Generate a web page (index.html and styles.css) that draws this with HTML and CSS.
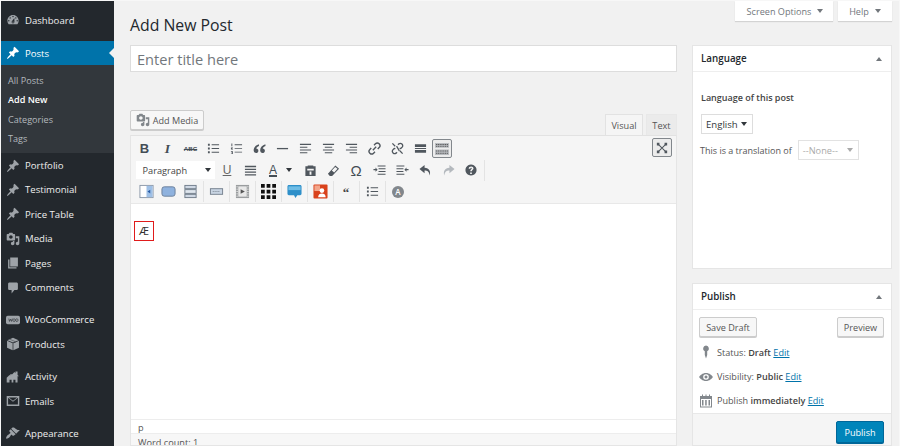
FILE: index.html
```html
<!DOCTYPE html>
<html lang="en">
<head>
<meta charset="utf-8">
<title>Add New Post</title>
<link rel="stylesheet" href="styles.css">
</head>
<body>
<svg class="defs" width="0" height="0" aria-hidden="true">
  <symbol id="i-dash" viewBox="0 0 20 20"><path d="M3.76 16h12.48c1.1-1.37 1.76-3.11 1.76-5 0-4.42-3.58-8-8-8s-8 3.58-8 8c0 1.89.66 3.63 1.76 5zM10 4c.55 0 1 .45 1 1s-.45 1-1 1-1-.45-1-1 .45-1 1-1zM6 6c.55 0 1 .45 1 1s-.45 1-1 1-1-.45-1-1 .45-1 1-1zm8 0c.55 0 1 .45 1 1s-.45 1-1 1-1-.45-1-1 .45-1 1-1zm-5.37 5.55L12 7v6c0 1.1-.9 2-2 2s-2-.9-2-2c0-.57.24-1.08.63-1.45zM4 10c.55 0 1 .45 1 1s-.45 1-1 1-1-.45-1-1 .45-1 1-1zm12 0c.55 0 1 .45 1 1s-.45 1-1 1-1-.45-1-1 .45-1 1-1zm-5 3c0-.55-.45-1-1-1s-1 .45-1 1 .45 1 1 1 1-.45 1-1z" fill-rule="evenodd"/></symbol>
  <symbol id="i-pin" viewBox="0 0 20 20"><path d="M10.44 3.02l1.82-1.82 6.36 6.35-1.83 1.82c-1.05-.68-2.48-.57-3.41.36l-.75.75c-.92.93-1.04 2.35-.35 3.41l-1.83 1.82-2.41-2.41-2.8 2.79c-.42.42-3.38 2.71-3.8 2.29s1.86-3.39 2.28-3.81l2.79-2.79L4.1 9.36l1.83-1.82c1.05.69 2.48.57 3.4-.36l.75-.75c.93-.92 1.05-2.35.36-3.41z"/></symbol>
  <symbol id="i-media" viewBox="0 0 20 20"><path d="M13 11V4c0-.55-.45-1-1-1h-1.67L9 1H5L3.67 3H2c-.55 0-1 .45-1 1v7c0 .55.45 1 1 1h10c.55 0 1-.45 1-1zM7 4.5c1.38 0 2.5 1.12 2.5 2.5S8.38 9.5 7 9.5 4.5 8.38 4.5 7 5.62 4.5 7 4.5zM14 6h5v10.5c0 1.38-1.12 2.5-2.5 2.5S14 17.88 14 16.5s1.12-2.5 2.5-2.5c.17 0 .34.02.5.05V9h-3V6zm-4 8.05V13h2v3.5c0 1.38-1.12 2.5-2.5 2.5S7 17.88 7 16.5 8.12 14 9.5 14c.17 0 .34.02.5.05z" fill-rule="evenodd"/></symbol>
  <symbol id="i-pages" viewBox="0 0 20 20"><path d="M6 15V2h11v13H6zM3 18V5h2v11h10v2H3z"/></symbol>
  <symbol id="i-comment" viewBox="0 0 20 20"><path d="M5 2h10c1.1 0 2 .9 2 2v7c0 1.1-.9 2-2 2h-3l-4 5v-5H5c-1.1 0-2-.9-2-2V4c0-1.1.9-2 2-2z"/></symbol>
  <symbol id="i-woo" viewBox="0 0 20 14"><rect width="20" height="12" y="1" rx="2.4"/><path d="M4 5l1 4 1.500-3.200L8 9l1-4M11.500 5.200a1.600 2 0 1 0 .01 0M15.500 5.200a1.600 2 0 1 0 .01 0" fill="none" stroke="#23282d" stroke-width=".9"/></symbol>
  <symbol id="i-box" viewBox="0 0 20 20"><path d="M10 1l8 3.500L10 8 2 4.500zM1.500 5.500l8 3.500v10l-8-3.500zM18.500 5.500v10l-8 3.500V9z"/><path d="M5 3l8 3.500v2" fill="none" stroke="#23282d" stroke-width=".6"/></symbol>
  <symbol id="i-act" viewBox="0 0 20 20"><path d="M1 18V11l4-4 1 1V6h3l3-3 1.500 1.500V2h3v5l2 2h-2v9h-3v-4h-3v4H8v-4H5v4z"/></symbol>
  <symbol id="i-mail" viewBox="0 0 20 16"><path d="M1 1h18v14H1zm2 2.500V13h14V3.500L10 9zM4 3l6 4.500L16 3z" fill-rule="evenodd"/></symbol>
  <symbol id="i-brush" viewBox="0 0 20 20"><path d="M14.480 11.060L7.410 3.990l1.500-1.500c.5-.56 2.300-.47 3.510.32 1.210.8 1.430 1.280 2.910 2.100 1.180.64 2.450 1.260 4.450.85zm-.71.71L6.700 4.700 4.930 6.470c-.39.39-.39 1.020 0 1.410l1.060 1.060c.39.39.39 1.030 0 1.420-.6.6-1.430 1.110-2.210 1.690-.35.26-.7.53-1.010.84C1.430 13.230.1 16.490.1 17.500c0 1.170 2.830.7 4.500-1 .9-.9 1.600-2.700 2.500-3.800.4-.4 1-.4 1.400 0l1.060 1.060c.39.39 1.020.39 1.410 0z"/></symbol>
  <symbol id="t-ul" viewBox="0 0 14 14"><path d="M1 2h2v2H1zM1 6h2v2H1zM1 10h2v2H1zM5 2.500h8v1H5zM5 6.500h8v1H5zM5 10.500h8v1H5z"/></symbol>
  <symbol id="t-ol" viewBox="0 0 14 14"><path d="M1.500 1.500h1v3h-1zM1 6h2.200v.8H2v.6h1.200v.8H1zM1 10h2.200v3H1v-.7h1.400v-.5H1.500v-.6h.9v-.5H1zM5 2.500h8v.9H5zM5 6.500h8v.9H5zM5 10.500h8v.9H5z"/></symbol>
  <symbol id="t-quote" viewBox="0 0 14 14"><path d="M6.300 2.500C3 3.500.7 5.800.7 9c0 1.700 1.100 2.800 2.500 2.800S5.800 10.700 5.800 9.300 4.700 6.900 3.500 6.900c.2-1 1.200-2 3-2.700zM13.300 2.500c-3.300 1-5.600 3.300-5.600 6.500 0 1.700 1.100 2.800 2.500 2.800s2.600-1.100 2.600-2.500-1.100-2.400-2.300-2.400c.2-1 1.200-2 3-2.700z"/></symbol>
  <symbol id="t-hr" viewBox="0 0 14 14"><path d="M1 6.400h12v1.400H1z"/></symbol>
  <symbol id="t-al" viewBox="0 0 14 14"><path d="M1 2h12v1.200H1zM1 5h8v1.200H1zM1 8h12v1.200H1zM1 11h8v1.200H1z"/></symbol>
  <symbol id="t-ac" viewBox="0 0 14 14"><path d="M1 2h12v1.200H1zM3 5h8v1.200H3zM1 8h12v1.200H1zM3 11h8v1.200H3z"/></symbol>
  <symbol id="t-ar" viewBox="0 0 14 14"><path d="M1 2h12v1.200H1zM5 5h8v1.200H5zM1 8h12v1.200H1zM5 11h8v1.200H5z"/></symbol>
  <symbol id="t-link" viewBox="0 0 14 14"><path d="M5.200 8.800l3.600-3.600M6.500 3.500l1.500-1.500a2.700 2.700 0 0 1 4 4L10.500 7.500M7.500 10.500L6 12a2.700 2.700 0 0 1-4-4L3.500 6.500" fill="none" stroke="currentColor" stroke-width="1.500"/></symbol>
  <symbol id="t-unlink" viewBox="0 0 14 14"><path d="M7.500 3l1-1a2.500 2.500 0 0 1 3.500 3.500l-1.500 1.500-1.200-.2M6.500 11l-1 1A2.500 2.500 0 0 1 2 8.500l1.500-1.500 1.200.2M1.500 1.500l3 3M12.500 12.500l-3-3M9 9.500l-3-5" fill="none" stroke="currentColor" stroke-width="1.400"/></symbol>
  <symbol id="t-more" viewBox="0 0 14 14"><path d="M1 2.500h12v3H1zM1 8.500h12v3H1zM1 6.500h12v1H1z"/></symbol>
  <symbol id="t-kitchen" viewBox="0 0 16 14"><path d="M1 1h14v4.800H1zM1 7.500h14V13H1z" fill="#b9bcc0"/><path d="M2 2.500h12M2 4.300h12M2 9h12M2 11.300h12" stroke="#444" stroke-width=".8" stroke-dasharray="1.200 .6"/></symbol>
  <symbol id="t-just" viewBox="0 0 14 14"><path d="M1 2h12v1.500H1zM1 5h12v1.500H1zM1 8h12v1.500H1zM1 11h12v1.500H1z"/></symbol>
  <symbol id="t-paste" viewBox="0 0 14 14"><path d="M1.500 2.500H4V1.500h6v1h2.500V13h-11zM3.500 5v2h7V5zM6 8v3.500h2V8z" fill-rule="evenodd"/></symbol>
  <symbol id="t-erase" viewBox="0 0 14 14"><path d="M9 1.500l4 3.500-7.500 8H3l-2-2.500zM8.800 3.200l2.500 2-3.600 4-2.500-2.200z" fill-rule="evenodd"/></symbol>
  <symbol id="t-indent" viewBox="0 0 14 14"><path d="M5 1.500h8.500v1.200H5zM6 4.500h7.500v1.200H6zM6 7.500h7.500v1.200H6zM5 10.500h8.500v1.200H5zM.5 5.400h2.200V3.800L5 6.100 2.700 8.400V6.800H.5z"/></symbol>
  <symbol id="t-outdent" viewBox="0 0 14 14"><path d="M.5 1.500H9v1.200H.5zM.5 4.500H8v1.200H.5zM.5 7.500H8v1.200H.5zM.5 10.500H9v1.200H.5zM13.500 5.400h-2.200V3.800L9 6.100l2.300 2.300V6.800h2.200z"/></symbol>
  <symbol id="t-undo" viewBox="0 0 14 14"><path d="M6 1L.5 5.500 6 10V7c3 0 5 1 5.500 5.500C13 8 11 4 6 4z"/></symbol>
  <symbol id="t-redo" viewBox="0 0 14 14"><path d="M8 1l5.500 4.500L8 10V7c-3 0-5 1-5.500 5.500C1 8 3 4 8 4z"/></symbol>
  <symbol id="t-help" viewBox="0 0 14 14"><path d="M7 .5a6.500 6.500 0 1 0 .01 0zM6 9.800h2v1.800H6zM4.300 5.500C4.300 3.800 5.500 2.800 7.200 2.800c1.600 0 2.700 1 2.700 2.300 0 1.700-1.900 1.900-1.900 3.500H6.100c0-2.200 1.800-2.400 1.800-3.400 0-.5-.3-.8-.8-.8s-.8.4-.9 1z" fill-rule="evenodd"/></symbol>
</svg>
<div class="page">
  <nav class="side">
    <a class="item"><svg class="mi"><use href="#i-dash"/></svg>Dashboard</a>
    <div class="gap-s"></div>
    <a class="item active"><svg class="mi"><use href="#i-pin"/></svg>Posts</a>
    <div class="sub">
      <a>All Posts</a>
      <a class="cur">Add New</a>
      <a>Categories</a>
      <a>Tags</a>
    </div>
    <a class="item"><svg class="mi"><use href="#i-pin"/></svg>Portfolio</a>
    <a class="item"><svg class="mi"><use href="#i-pin"/></svg>Testimonial</a>
    <a class="item"><svg class="mi"><use href="#i-pin"/></svg>Price Table</a>
    <a class="item"><svg class="mi"><use href="#i-media"/></svg>Media</a>
    <a class="item"><svg class="mi"><use href="#i-pages"/></svg>Pages</a>
    <a class="item"><svg class="mi"><use href="#i-comment"/></svg>Comments</a>
    <div class="gap-m"></div>
    <a class="item"><svg class="mi"><use href="#i-woo"/></svg>WooCommerce</a>
    <a class="item"><svg class="mi"><use href="#i-box"/></svg>Products</a>
    <div class="gap-m"></div>
    <a class="item"><svg class="mi"><use href="#i-act"/></svg>Activity</a>
    <a class="item"><svg class="mi"><use href="#i-mail"/></svg>Emails</a>
    <div class="gap-m"></div>
    <a class="item"><svg class="mi"><use href="#i-brush"/></svg>Appearance</a>
  </nav>
  <main class="main">
    <div class="screen-tabs">
      <button class="stab so">Screen Options<i class="caret"></i></button>
      <button class="stab hp">Help<i class="caret"></i></button>
    </div>
    <div class="cols">
      <section class="left">
        <h1 class="title">Add New Post</h1>
        <div class="title-input">Enter title here</div>
        <div class="media-row">
          <button class="btn add-media"><svg class="am"><use href="#i-media"/></svg>Add Media</button>
          <div class="tabs">
            <span class="tab on">Visual</span>
            <span class="tab tx">Text</span>
          </div>
        </div>
        <div class="editor">
          <div class="toolbar">
            <div class="tools">
              <div class="row">
                <span class="t tb">B</span>
                <span class="t ti">I</span>
                <span class="t tabc">ABC</span>
                <span class="t"><svg class="g"><use href="#t-ul"/></svg></span>
                <span class="t"><svg class="g"><use href="#t-ol"/></svg></span>
                <span class="t"><svg class="g"><use href="#t-quote"/></svg></span>
                <span class="t"><svg class="g"><use href="#t-hr"/></svg></span>
                <span class="t"><svg class="g"><use href="#t-al"/></svg></span>
                <span class="t"><svg class="g"><use href="#t-ac"/></svg></span>
                <span class="t"><svg class="g"><use href="#t-ar"/></svg></span>
                <span class="t"><svg class="g"><use href="#t-link"/></svg></span>
                <span class="t"><svg class="g"><use href="#t-unlink"/></svg></span>
                <span class="t"><svg class="g"><use href="#t-more"/></svg></span>
                <span class="t kitchen"><svg class="gk"><use href="#t-kitchen"/></svg></span>
              </div>
              <div class="row row2">
                <span class="fmt">Paragraph<i class="caret dark"></i></span>
                <span class="t tu">U</span>
                <span class="t"><svg class="g"><use href="#t-just"/></svg></span>
                <span class="t ta">A</span>
                <span class="cm"><i class="caret dark"></i></span>
                <span class="t"><svg class="g"><use href="#t-paste"/></svg></span>
                <span class="t"><svg class="g"><use href="#t-erase"/></svg></span>
                <span class="t tom">Ω</span>
                <span class="t"><svg class="g"><use href="#t-indent"/></svg></span>
                <span class="t"><svg class="g"><use href="#t-outdent"/></svg></span>
                <span class="t"><svg class="g"><use href="#t-undo"/></svg></span>
                <span class="t off"><svg class="g"><use href="#t-redo"/></svg></span>
                <span class="t"><svg class="g gh"><use href="#t-help"/></svg></span>
                <span class="div"></span>
              </div>
              <div class="row row3">
                <span class="u"><svg class="c" viewBox="0 0 16 16"><rect x="1" y="1.500" width="14" height="13" fill="#fff" stroke="#8a97a8"/><rect x="8" y="2" width="6.500" height="12" fill="#9fc0e6"/><path d="M9 8l3-2v4z" fill="#2a5ea8"/></svg></span>
                <span class="u"><svg class="c" viewBox="0 0 16 16"><rect x="1" y="3" width="14" height="10" rx="2.500" fill="#8fb2de" stroke="#6b7f9a"/></svg></span>
                <span class="u"><svg class="c" viewBox="0 0 16 16"><rect x="2" y="1.500" width="12" height="3.500" fill="#cfd8e4" stroke="#707c8a"/><rect x="2" y="6" width="12" height="4" fill="#dfe6ee" stroke="#707c8a"/><rect x="2" y="11" width="12" height="3.500" fill="#cfd8e4" stroke="#707c8a"/></svg></span>
                <span class="div"></span>
                <span class="u"><svg class="c" viewBox="0 0 16 16"><rect x="1.500" y="5" width="13" height="6" fill="#c8d4e2" stroke="#76818e"/><path d="M4 8h8" stroke="#76818e" stroke-dasharray="1 1"/></svg></span>
                <span class="div"></span>
                <span class="u"><svg class="c" viewBox="0 0 16 16"><rect x="1" y="1" width="14" height="14" fill="#9a9d9f"/><rect x="3.500" y="2.500" width="9" height="11" fill="#e8e8e8"/><path d="M6 5.500l4.500 2.500L6 10.500z" fill="#555"/><path d="M1.500 3h1.500M1.500 5.500h1.500M1.500 8h1.500M1.500 10.500h1.500M1.500 13h1.500M13 3h1.500M13 5.500h1.500M13 8h1.500M13 10.500h1.500M13 13h1.500" stroke="#eee" stroke-width=".9"/></svg></span>
                <span class="div"></span>
                <span class="u"><svg class="c k" viewBox="0 0 16 16"><path d="M0 0h4v4H0zM6 0h4v4H6zM12 0h4v4h-4zM0 6h4v4H0zM6 6h4v4H6zM12 6h4v4h-4zM0 12h4v4H0zM6 12h4v4H6zM12 12h4v4h-4z" fill="#111"/></svg></span>
                <span class="div"></span>
                <span class="u"><svg class="c" viewBox="0 0 16 16"><path d="M2 1h12c.8 0 1.500.7 1.500 1.500v8c0 .8-.7 1.500-1.500 1.500h-3l-2 3-1.500-3H2c-.8 0-1.500-.7-1.500-1.500v-8C.5 1.700 1.200 1 2 1z" fill="#2e8fc9"/><path d="M1.500 2.500h13v4h-13z" fill="#6fbde6"/></svg></span>
                <span class="div"></span>
                <span class="u"><svg class="c" viewBox="0 0 16 16"><rect x=".5" y=".5" width="15" height="15" rx="1" fill="#d9421c"/><rect x="1.500" y="1.500" width="6" height="6" fill="#f3a58a"/><circle cx="9.500" cy="7" r="2.500" fill="#fff"/><path d="M5.500 14c0-3 2-4 4-4s4 1 4 4z" fill="#fff"/></svg></span>
                <span class="div"></span>
                <span class="u tq">“</span>
                <span class="div"></span>
                <span class="u"><svg class="g"><use href="#t-ul"/></svg></span>
                <span class="div"></span>
                <span class="u"><span class="round">A</span></span>
              </div>
            </div>
            <span class="full"><svg class="g gf" viewBox="0 0 14 14"><path d="M1 1h3v3H1zM10 1h3v3h-3zM1 10h3v3H1zM10 10h3v3h-3z"/><path d="M3 3l8 8M11 3l-8 8" stroke="currentColor" stroke-width="1.200"/></svg></span>
          </div>
          <div class="content"><span class="ae">Æ</span></div>
          <div class="path">p</div>
          <div class="count">Word count: 1</div>
        </div>
      </section>
      <aside class="right">
        <div class="box lang">
          <h2 class="box-h">Language<i class="caret up"></i></h2>
          <div class="lang-body">
            <p class="lbl">Language of this post</p>
            <span class="sel">English<i class="caret dark"></i></span>
            <div class="trans">This is a translation of<span class="sel none">--None--<i class="caret"></i></span></div>
          </div>
        </div>
        <div class="box pub">
          <h2 class="box-h">Publish<i class="caret up"></i></h2>
          <div class="pub-btns">
            <button class="btn sd">Save Draft</button>
            <button class="btn pv">Preview</button>
          </div>
          <div class="meta"><svg class="mt" viewBox="0 0 14 14"><path d="M7 .5a3 3 0 0 1 1.200 5.700V10L7 13.500 5.800 10V6.200A3 3 0 0 1 7 .5z"/></svg><span>Status: <b>Draft</b> <a>Edit</a></span></div>
          <div class="meta"><svg class="mt" viewBox="0 0 14 14"><path d="M7 3C3.500 3 1 5.500 0 7c1 1.500 3.500 4 7 4s6-2.500 7-4c-1-1.500-3.500-4-7-4zm0 1.200A2.800 2.800 0 1 1 7 9.800 2.800 2.800 0 0 1 7 4.200zm0 1.300a1.500 1.500 0 1 0 .01 0z" fill-rule="evenodd"/></svg><span>Visibility: <b>Public</b> <a>Edit</a></span></div>
          <div class="meta"><svg class="mt" viewBox="0 0 14 14"><path d="M1 2h2V.5h1V2h2.500V.5h1V2H10V.5h1V2h2v11.500H1zM2 5v7.500h10V5zM3 6h1.500v5.500H3zM6.200 6h1.500v5.500H6.200zM9.500 6H11v5.500H9.500z" fill-rule="evenodd"/></svg><span>Publish <b>immediately</b> <a>Edit</a></span></div>
          <div class="pub-foot"><button class="btn primary">Publish</button></div>
        </div>
      </aside>
    </div>
  </main>
</div>
</body>
</html>
```
FILE: styles.css
```css
* { box-sizing: border-box; }
html, body { margin: 0; padding: 0; }
body { font-family: "Open Sans", "Liberation Sans", sans-serif; font-size: 9.500px; color: #444; background: #f1f1f1; }
.defs { display: block; height: 0; }
.page { width: 900px; height: 446px; overflow: hidden; display: flex; background: #f1f1f1; border: 1px solid #f7f7f7; border-bottom: 0; }
i { font-style: normal; }

.side { width: 113px; flex: none; background: #23282d; padding-top: 7px; color: #eee; }
.item { position: relative; display: flex; align-items: center; height: 24.4px; padding-left: 5px; color: #eee; font-size: 9.600px; }
.mi { width: 14px; height: 14px; margin-right: 5px; fill: #9ea3a8; flex: none; }
.active { background: #0073aa; color: #fff; }
.active .mi { fill: #fff; }
.active::after { content: ""; position: absolute; right: 0; top: 7px; border: 5px solid transparent; border-right-color: #f1f1f1; border-left: 0; }
.gap-s { height: 8.600px; }
.gap-m { height: 8px; }
.sub { background: #32373c; padding: 5.500px 0 3px 7px; height: 88px; }
.sub a { display: block; height: 19.500px; line-height: 19.500px; color: #b4b9be; font-size: 9.100px; }
.sub .cur { color: #fff; font-weight: 600; }

.main { flex: 1; display: flex; flex-direction: column; padding: 0 7px 0 16px; min-width: 0; }
.screen-tabs { display: flex; justify-content: flex-end; gap: 5px; height: 20px; flex: none; }
.stab { height: 20px; border: 0; background: #fff; box-shadow: 0 1px 1px rgba(0,0,0,.12); color: #72777c; font: 9.100px "Open Sans", sans-serif; padding: 0; display: flex; align-items: center; justify-content: center; gap: 6px; }
.so { width: 98px; padding-left: 2px; }
.hp { width: 54px; }
.caret { display: inline-block; width: 0; height: 0; border: 3.500px solid transparent; border-top: 4px solid #72777c; border-bottom: 0; }
.caret.dark { border-top-color: #32373c; }
.caret.up { border-top: 0; border-bottom: 4px solid #72777c; }

.cols { display: flex; gap: 15px; flex: 1; min-height: 0; }
.left { width: 547px; flex: none; display: flex; flex-direction: column; }
.right { width: 200px; flex: none; margin-top: 24px; display: flex; flex-direction: column; gap: 14px; }

.title { margin: -5px 0 0; height: 29px; line-height: 18px; font-size: 15.800px; font-weight: 400; color: #23282d; flex: none; }
.title-input { height: 27px; background: #fff; border: 1px solid #ddd; font-size: 14.600px; line-height: 27px; padding-left: 6px; color: #72777c; flex: none; }

.media-row { display: flex; justify-content: space-between; align-items: flex-end; height: 63px; flex: none; }
.btn { display: inline-flex; align-items: center; justify-content: center; height: 20px; border: 1px solid #ccc; border-radius: 2px; background: #f7f7f7; box-shadow: 0 1px 0 #ccc; color: #555; font: 9.100px "Open Sans", sans-serif; padding: 0; }
.add-media { width: 74px; margin-bottom: 5px; }
.am { width: 14px; height: 14px; fill: #82878c; margin-right: 3px; }
.tabs { display: flex; gap: 3px; }
.tab { width: 38px; height: 21px; line-height: 21px; text-align: center; font-size: 9.200px; color: #555; background: #ebebeb; border: 1px solid #e8e8e8; border-bottom: 0; }
.tab.tx { width: 31px; }
.tab.on { background: #f5f5f5; border-color: #e2e2e2; }

.editor { flex: 1; min-height: 0; display: flex; flex-direction: column; border: 1px solid #e5e5e5; border-top-color: #e2e2e2; overflow: hidden; }
.toolbar { display: flex; justify-content: space-between; background: #f5f5f5; height: 68px; flex: none; border-bottom: 1px solid #e8e8e8; padding: 2px 4px 0 2px; }
.tools { display: flex; flex-direction: column; }
.row { display: flex; align-items: center; height: 21.500px; }
.t { width: 23px; height: 21px; display: inline-flex; align-items: center; justify-content: center; color: #444d55; flex: none; font-size: 12px; }
.g { width: 13px; height: 13px; fill: currentColor; color: #50575e; }
.gh { width: 12px; height: 12px; }
.gf { width: 12px; height: 12px; }
.tb { font: 700 13px "Liberation Sans", sans-serif; }
.ti { font: italic 700 13.500px "Liberation Serif", serif; }
.tabc { font: 700 6.200px "Liberation Sans", sans-serif; text-decoration: line-through; }
.tu { font: 12px "Liberation Sans", sans-serif; text-decoration: underline; color: #666; }
.ta { font: 12px "Liberation Sans", sans-serif; text-decoration: underline; text-decoration-thickness: 1.500px; }
.tom { font: 15px "Liberation Sans", sans-serif; }
.kitchen { width: 20px; height: 19px; background: #ececec; border: 1px solid #82878c; border-radius: 2px; }
.gk { width: 16px; height: 14px; }
.off .g { color: #b4b9be; }
.row2 { padding-left: 2.500px; }
.fmt { width: 79px; height: 18px; background: #fff; display: flex; align-items: center; justify-content: space-between; padding: 0 4px 0 7px; font-size: 9.200px; color: #444; margin-right: 1px; flex: none; }
.cm { width: 12.500px; display: inline-flex; margin-left: 1.500px; flex: none; }
.div { width: 1px; height: 21px; background: #e3e3e3; flex: none; margin: 0 1px; }
.row3 { padding-left: 2px; }
.u { width: 22px; height: 20px; display: inline-flex; align-items: center; justify-content: center; flex: none; }
.row3 .div { margin: 0 1.500px; }
.c { width: 15px; height: 15px; }
.tq { font: 700 13px "Liberation Serif", serif; color: #444; padding-top: 3px; }
.round { width: 12px; height: 12px; border-radius: 50%; background: #82878c; color: #fff; font-size: 8px; font-weight: 600; line-height: 12px; text-align: center; }
.full { width: 20px; height: 19px; margin-top: 0; display: inline-flex; align-items: center; justify-content: center; background: #ececec; border: 1px solid #82878c; border-radius: 2px; }

.content { height: 215px; flex: none; background: #fff; padding: 17px 3px 0; }
.ae { display: inline-block; width: 20px; height: 20px; border: 1px solid #e01b1b; text-align: center; line-height: 18px; font-size: 11.500px; color: #333; }
.path { height: 15px; flex: none; background: #fff; border-top: 1px solid #ededed; border-bottom: 1px solid #ededed; padding-left: 7px; font-size: 9.200px; line-height: 15px; color: #555; }
.count { flex: 1; background: #f7f7f7; padding-left: 7px; font-size: 9.200px; line-height: 17px; color: #555; }

.box { background: #fff; border: 1px solid #e5e5e5; }
.box-h { margin: 0; height: 26px; padding: 0 9px 0 8px; display: flex; justify-content: space-between; align-items: center; border-bottom: 1px solid #eee; font-size: 9.800px; font-weight: 600; color: #23282d; }
.lang { height: 224px; flex: none; }
.lang-body { padding: 19px 8px 0; }
.lbl { margin: 0 0 9px; font-size: 9px; font-weight: 600; line-height: 14px; color: #444; }
.sel { display: inline-flex; align-items: center; justify-content: space-between; width: 52px; height: 20px; border: 1px solid #ddd; background: #fff; padding: 0 5px 0 4px; font-size: 9.600px; color: #32373c; }
.trans { display: flex; align-items: center; gap: 6px; margin-top: 6px; margin-left: -1px; font-size: 9px; color: #555; }
.sel.none { width: 61px; color: #aaa; border-color: #e2e2e2; font-size: 9.200px; }
.sel.none .caret { border-top-color: #aaa; }

.pub { flex: 1; display: flex; flex-direction: column; }
.pub-btns { display: flex; justify-content: space-between; padding: 7px 7px 0 6px; }
.sd { width: 58px; }
.pv { width: 47px; }
.meta { display: flex; align-items: center; height: 24.400px; padding-left: 6px; font-size: 9.100px; color: #555; white-space: pre; flex: none; }
.pub-btns + .meta { margin-top: 3px; }
.meta b { font-weight: 600; color: #444; }
.meta a { color: #0073aa; text-decoration: underline; }
.mt { width: 14px; height: 14px; fill: #82878c; margin-right: 4px; flex: none; }
.pub-foot { flex: 1; background: #f5f5f5; border-top: 1px solid #e8e8e8; display: flex; justify-content: flex-end; padding: 7px 7px 0; }
.btn.primary { width: 48px; height: 22px; background: #0085ba; border-color: #006799; color: #fff; box-shadow: 0 1px 0 #006799; }
```
